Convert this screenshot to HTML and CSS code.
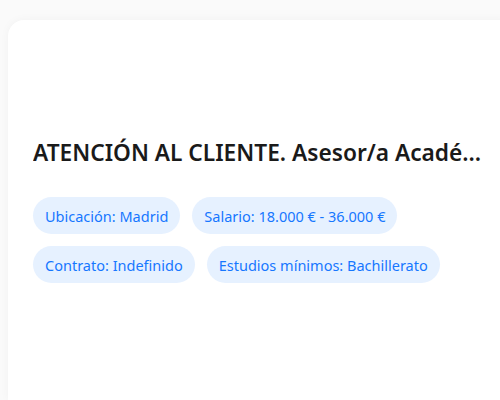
FILE: index.html
```html
<!DOCTYPE html>
<html lang="es">
<head>
<meta charset="utf-8">
<link rel="stylesheet" href="styles.css">
</head>
<body>
<div class="card">
  <h2 class="title">ATENCIÓN AL CLIENTE. Asesor/a Académico/a de Formación</h2>
  <div class="tags">
    <span class="tag">Ubicación: Madrid</span>
    <span class="tag">Salario: 18.000 € - 36.000 €</span>
    <span class="tag">Contrato: Indefinido</span>
    <span class="tag">Estudios mínimos: Bachillerato</span>
  </div>
</div>
</body>
</html>
```
FILE: styles.css
```css
html, body {
  margin: 0;
  padding: 0;
  background: #fafafa;
  overflow: hidden;
  height: 400px;
}
body {
  padding: 20px 0 0 8px;
  box-sizing: border-box;
  font-family: "Noto Sans", "Open Sans", sans-serif;
}
.card {
  width: 500px;
  height: 380px;
  box-sizing: border-box;
  background: #ffffff;
  border-radius: 16px 0 0 0;
  box-shadow: 0 0 10px rgba(0, 0, 0, 0.04);
  padding: 118px 25px 0 25px;
}
.title {
  margin: 0;
  font-size: 22.7px;
  font-weight: 600;
  line-height: 30px;
  color: #1a1a1a;
  white-space: nowrap;
  overflow: hidden;
  text-overflow: ellipsis;
}
.tags {
  display: flex;
  flex-wrap: wrap;
  gap: 12px;
  margin-top: 29px;
  width: 420px;
}
.tag {
  display: inline-flex;
  align-items: center;
  height: 37px;
  padding: 0 12px;
  border-radius: 19px;
  background: #e6f1ff;
  color: #1677ff;
  font-size: 14.5px;
}
```
